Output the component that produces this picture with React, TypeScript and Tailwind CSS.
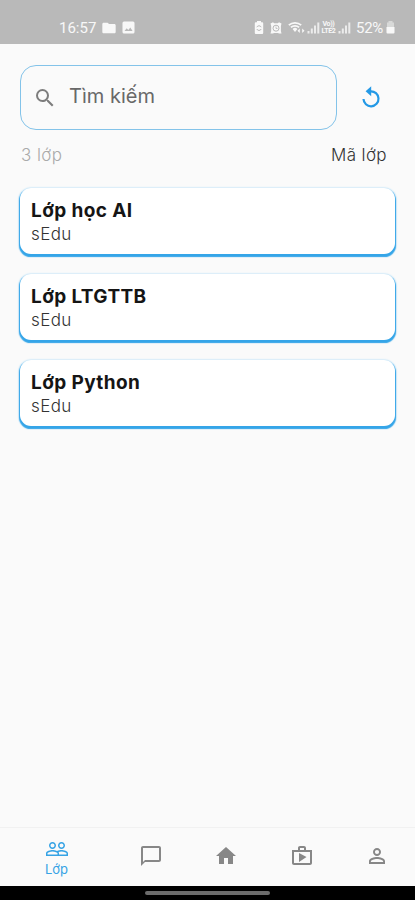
import type { IconType } from "react-icons";
import {
  MdChatBubbleOutline,
  MdFolder,
  MdHome,
  MdOutlineShop,
  MdPeopleOutline,
  MdPersonOutline,
  MdSearch,
} from "react-icons/md";

interface ClassItem {
  name: string;
  org: string;
}

const CLASSES: ClassItem[] = [
  { name: "Lớp học AI", org: "sEdu" },
  { name: "Lớp LTGTTB", org: "sEdu" },
  { name: "Lớp Python", org: "sEdu" },
];

interface Tab {
  id: string;
  Icon: IconType;
  label?: string;
}

const TABS: Tab[] = [
  { id: "classes", Icon: MdPeopleOutline, label: "Lớp" },
  { id: "chat", Icon: MdChatBubbleOutline },
  { id: "home", Icon: MdHome },
  { id: "media", Icon: MdOutlineShop },
  { id: "profile", Icon: MdPersonOutline },
];

function Signal() {
  return (
    <svg width="13" height="12" viewBox="0 0 13 12" fill="currentColor">
      <rect x="0.5" y="9" width="2" height="2.5" opacity=".8" />
      <rect x="3.8" y="6.5" width="2" height="5" opacity=".8" />
      <rect x="7" y="3.5" width="2" height="8" opacity=".8" />
      <rect x="10.3" y="0.5" width="2" height="11" opacity=".8" />
    </svg>
  );
}

function StatusBar() {
  return (
    <header className="flex h-[44px] shrink-0 items-center justify-between bg-[#b9b9b9] pl-[59px] pr-[20px] pt-[11px] font-[Roboto,sans-serif] text-[15px] leading-4 text-white/90">
      <div className="flex items-center">
        <span className="w-[38px]">16:57</span>
        <MdFolder className="ml-[4px] h-4 w-4" />
        <svg className="ml-[5px]" width="13" height="13" viewBox="0 0 13 13">
          <rect x="0.5" y="0.5" width="12" height="12" rx="1.5" fill="currentColor" />
          <path d="M2.5 10l2.2-2.8 1.6 1.7 2-2.4 2.3 3.5z" fill="#b9b9b9" />
        </svg>
      </div>
      <div className="flex items-center">
        <svg width="10" height="13" viewBox="0 0 10 13">
          <path d="M3 0h4v1.3h1.2a1 1 0 011 1V12a1 1 0 01-1 1H1.800a1 1 0 01-1-1V2.300a1 1 0 011-1H3z" fill="currentColor" />
          <path d="M2.800 6.200a2.400 2.400 0 014.400 0M7.200 8a2.400 2.400 0 01-4.400 0" fill="none" stroke="#b9b9b9" />
        </svg>
        <svg className="ml-[6px]" width="12" height="12" viewBox="0 0 12 12">
          <path d="M.5 1.500L3 .3l1.200 1h3.600L9 .3l2.500 1.200-.6 2.500v5l.6 2.500H9L8 11H4l-1 .5H.5L1.200 9V4z" fill="currentColor" />
          <circle cx="6" cy="6.200" r="3" fill="none" stroke="#b9b9b9" />
          <path d="M6 4.500v2h1.500" fill="none" stroke="#b9b9b9" strokeWidth=".8" />
        </svg>
        <svg className="ml-[6px]" width="17" height="13" viewBox="0 0 17 13">
          <path d="M.8 4.200a9.200 9.200 0 0112.400 0M2.900 6.400a6 6 0 018.200 0" fill="none" stroke="currentColor" strokeWidth="1.700" />
          <path d="M4.600 7.900a3.500 3.500 0 014.800 0L7 11z" fill="currentColor" />
          <path d="M9.500 9.800l2.300-2.300v4.600zM16.500 9.800l-2.300-2.300v4.600z" fill="currentColor" />
        </svg>
        <span className="ml-[2px]">
          <Signal />
        </span>
        <span className="ml-px flex w-[15px] flex-col items-center text-[7px] font-bold leading-[6.5px] tracking-tighter">
          <span>Vo))</span>
          <span>LTE2</span>
        </span>
        <span className="ml-[2px]">
          <Signal />
        </span>
        <span className="ml-[5px] w-[28px] tracking-[-0.3px]">52%</span>
        <svg className="ml-[2px]" width="9" height="13" viewBox="0 0 9 13" fill="currentColor">
          <path d="M2.500 0h4v1.500H8V6H1V1.500h1.500z" opacity=".5" />
          <path d="M.5 6h8v5.500a1 1 0 01-1 1h-6a1 1 0 01-1-1z" />
        </svg>
      </div>
    </header>
  );
}

function ReplayIcon() {
  return (
    <svg width="26" height="26" viewBox="0 0 26 26">
      <path d="M12.500 6.300A7.500 7.500 0 115.500 14" fill="none" stroke="currentColor" strokeWidth="2.200" />
      <path d="M13.200 1.300v10L7.600 6.300z" fill="currentColor" />
    </svg>
  );
}

function SearchBar() {
  return (
    <div className="flex items-center">
      <label className="flex h-[65px] w-[317px] items-center rounded-[16px] border-[1.500px] border-[#83c3e9] pl-[12px]">
        <MdSearch className="h-6 w-6 text-[#7d7d7d]" />
        <input
          type="text"
          placeholder="Tìm kiếm"
          className="ml-[12px] min-w-0 flex-1 bg-transparent pb-[4px] text-[20px] outline-none placeholder:text-[#686868]"
        />
      </label>
      <button type="button" className="ml-[21px] text-[#2499e6]">
        <ReplayIcon />
      </button>
    </div>
  );
}

function ClassCard({ name, org }: ClassItem) {
  return (
    <article className="h-[66px] rounded-[11px] bg-white pl-[11px] pt-[11px] shadow-[0_2px_1px_0.5px_#35a5e8,0_1px_2px_1px_#8fcff5]">
      <h2 className="text-[19px] font-bold leading-6 tracking-[0.4px] text-[#151515]">{name}</h2>
      <p className="text-[17px] font-light leading-[22px] tracking-[0.4px] text-[#333]">{org}</p>
    </article>
  );
}

function BottomNav() {
  return (
    <nav className="flex h-[59px] shrink-0 border-t border-[#f1f1f1] bg-[#fafafa] pb-[2px]">
      {TABS.map(({ id, Icon, label }) => (
        <button
          key={id}
          type="button"
          className={
            label
              ? "flex w-[113px] flex-col items-center justify-center pt-[2px] text-[#36a3e5]"
              : "flex flex-1 items-center justify-center text-[#878787]"
          }
        >
          <Icon className="h-6 w-6" />
          {label && <span className="text-[13px] leading-4">{label}</span>}
        </button>
      ))}
    </nav>
  );
}

export default function App() {
  return (
    <div className="flex h-[900px] w-[415px] flex-col bg-[#fafafa] font-[Inter,sans-serif]">
      <StatusBar />
      <main className="flex-1 px-[20px] pt-[21px]">
        <SearchBar />
        <div className="mt-[13px] flex items-center justify-between pl-px pr-[8px] text-[17px] leading-6 tracking-[0.4px]">
          <span className="font-light text-[#aaa]">3 lớp</span>
          <span className="font-light text-[#333]">Mã lớp</span>
        </div>
        <section className="mt-[21px] flex flex-col gap-[20px]">
          {CLASSES.map((item) => (
            <ClassCard key={item.name} {...item} />
          ))}
        </section>
      </main>
      <BottomNav />
      <footer className="flex h-[14px] shrink-0 justify-center bg-black pt-[5px]">
        <div className="h-1 w-[125px] rounded-full bg-[#6c6c6c]" />
      </footer>
    </div>
  );
}
